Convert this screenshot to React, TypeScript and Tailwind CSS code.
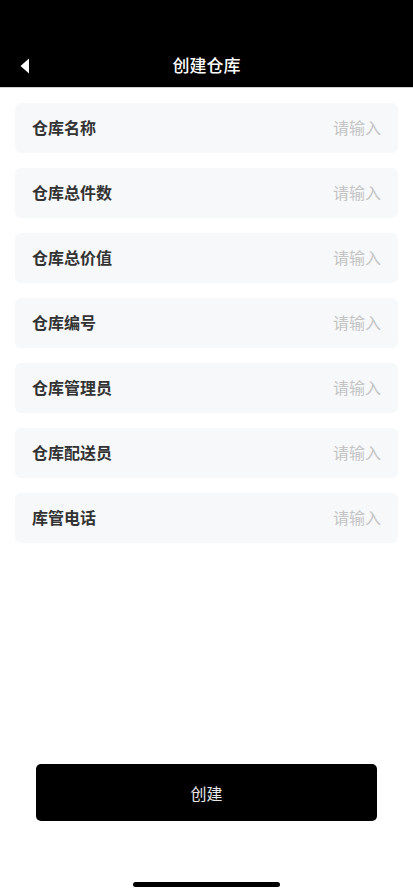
const font = { fontFamily: '"Noto Sans CJK SC", "Noto Sans", sans-serif' };

const fields = ["仓库名称", "仓库总件数", "仓库总价值", "仓库编号", "仓库管理员", "仓库配送员", "库管电话"];

export default function App() {
  return (
    <div className="flex h-[895px] w-[413px] flex-col bg-white" style={font}>
      <header className="relative flex h-[88px] items-end justify-center border-b border-[#d0d0d0] bg-black pb-[10px]">
        <button className="absolute left-[20px] top-[58px]">
          <svg width="10" height="16" viewBox="0 0 10 16">
            <path d="M9 0.5 L0.5 8 L9 15.5 Z" fill="#fff" />
          </svg>
        </button>
        <h1 className="text-[17px] font-medium leading-[24px] text-white">创建仓库</h1>
      </header>

      <div className="flex flex-col gap-[15px] px-[15px] pt-[15px]">
        {fields.map((f) => (
          <div key={f} className="flex h-[50px] items-center justify-between rounded-md bg-[#f7f8fa] px-[17px] pb-[2px]">
            <span className="text-[16px] font-bold text-[#333]">{f}</span>
            <span className="text-[16px] text-[#c4c4c4]">请输入</span>
          </div>
        ))}
      </div>

      <div className="mt-auto px-[36px] pb-[61px]">
        <button className="flex h-[57px] w-full items-center justify-center rounded-[5px] bg-black text-[16px] text-[#e8e8e8]">
          创建
        </button>
      </div>

      <div className="flex justify-center pb-[8px]">
        <div className="h-[5px] w-[147px] rounded-full bg-black" />
      </div>
    </div>
  );
}
